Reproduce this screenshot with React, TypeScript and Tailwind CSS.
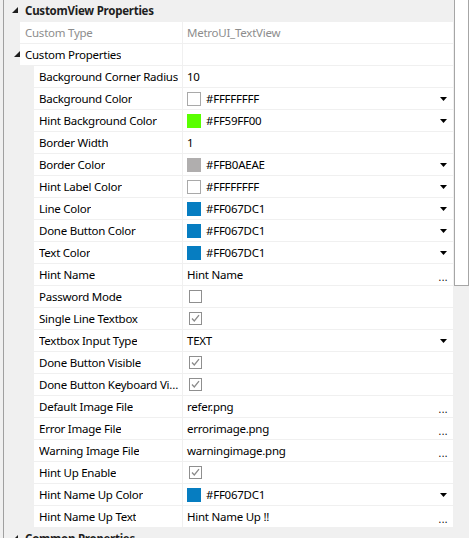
import React from 'react';

type Value =
  | { kind: 'text'; text: string; gray?: boolean }
  | { kind: 'color'; hex: string; swatch: string; outlined?: boolean }
  | { kind: 'check'; checked: boolean }
  | { kind: 'select'; text: string }
  | { kind: 'dialog'; text: string }
  | { kind: 'none' };

interface Row {
  label: string;
  level: 0 | 1;
  group?: boolean;
  gray?: boolean;
  value: Value;
}

const rows: Row[] = [
  { label: 'Custom Type', level: 0, gray: true, value: { kind: 'text', text: 'MetroUI_TextView', gray: true } },
  { label: 'Custom Properties', level: 0, group: true, value: { kind: 'none' } },
  { label: 'Background Corner Radius', level: 1, value: { kind: 'text', text: '10' } },
  { label: 'Background Color', level: 1, value: { kind: 'color', hex: '#FFFFFFFF', swatch: '#ffffff', outlined: true } },
  { label: 'Hint Background Color', level: 1, value: { kind: 'color', hex: '#FF59FF00', swatch: '#59ff00' } },
  { label: 'Border Width', level: 1, value: { kind: 'text', text: '1' } },
  { label: 'Border Color', level: 1, value: { kind: 'color', hex: '#FFB0AEAE', swatch: '#b0aeae' } },
  { label: 'Hint Label Color', level: 1, value: { kind: 'color', hex: '#FFFFFFFF', swatch: '#ffffff', outlined: true } },
  { label: 'Line Color', level: 1, value: { kind: 'color', hex: '#FF067DC1', swatch: '#067dc1' } },
  { label: 'Done Button Color', level: 1, value: { kind: 'color', hex: '#FF067DC1', swatch: '#067dc1' } },
  { label: 'Text Color', level: 1, value: { kind: 'color', hex: '#FF067DC1', swatch: '#067dc1' } },
  { label: 'Hint Name', level: 1, value: { kind: 'dialog', text: 'Hint Name' } },
  { label: 'Password Mode', level: 1, value: { kind: 'check', checked: false } },
  { label: 'Single Line Textbox', level: 1, value: { kind: 'check', checked: true } },
  { label: 'Textbox Input Type', level: 1, value: { kind: 'select', text: 'TEXT' } },
  { label: 'Done Button Visible', level: 1, value: { kind: 'check', checked: true } },
  { label: 'Done Button Keyboard Visible', level: 1, value: { kind: 'check', checked: true } },
  { label: 'Default Image File', level: 1, value: { kind: 'dialog', text: 'refer.png' } },
  { label: 'Error Image File', level: 1, value: { kind: 'dialog', text: 'errorimage.png' } },
  { label: 'Warning Image File', level: 1, value: { kind: 'dialog', text: 'warningimage.png' } },
  { label: 'Hint Up Enable', level: 1, value: { kind: 'check', checked: true } },
  { label: 'Hint Name Up Color', level: 1, value: { kind: 'color', hex: '#FF067DC1', swatch: '#067dc1' } },
  { label: 'Hint Name Up Text', level: 1, value: { kind: 'dialog', text: 'Hint Name Up !!' } },
];

function Expander() {
  return (
    <svg width="6" height="6" viewBox="0 0 6 6" className="shrink-0">
      <polygon points="6,0 6,6 0,6" fill="#1e1e1e" />
    </svg>
  );
}

function DropArrow() {
  return (
    <svg width="7" height="4" viewBox="0 0 7 4" className="shrink-0">
      <polygon points="0,0 7,0 3.5,4" fill="#000" />
    </svg>
  );
}

function CheckBox({ checked }: { checked: boolean }) {
  return (
    <div className="w-[13px] h-[13px] border border-[#8f8f8f] bg-white flex items-center justify-center">
      {checked && (
        <svg width="11" height="11" viewBox="0 0 11 11">
          <path d="M2 5.5 L4.3 8 L9 2.2" fill="none" stroke="#8a8a8a" strokeWidth="1.3" />
        </svg>
      )}
    </div>
  );
}

function ValueCell({ value }: { value: Value }) {
  switch (value.kind) {
    case 'text':
      return <span className={value.gray ? 'text-[#8d8d8d]' : 'text-black'}>{value.text}</span>;
    case 'color':
      return (
        <div className="flex flex-1 items-center">
          <div
            className={`w-[14px] h-[14px] shrink-0 ${value.outlined ? 'border border-[#a9a9a9]' : ''}`}
            style={{ backgroundColor: value.swatch }}
          />
          <span className="ml-[5px] text-black">{value.hex}</span>
          <div className="ml-auto mr-[6px]">
            <DropArrow />
          </div>
        </div>
      );
    case 'check':
      return (
        <div className="pl-[2px]">
          <CheckBox checked={value.checked} />
        </div>
      );
    case 'select':
      return (
        <div className="flex flex-1 items-center">
          <span className="text-black">{value.text}</span>
          <div className="ml-auto mr-[6px]">
            <DropArrow />
          </div>
        </div>
      );
    case 'dialog':
      return (
        <div className="flex flex-1 items-center">
          <span className="text-black">{value.text}</span>
          <span className="ml-auto mr-[5px] text-[10px] leading-[10px] text-black tracking-[0.5px] pt-[4px]">...</span>
        </div>
      );
    default:
      return null;
  }
}

function Category({ title }: { title: string }) {
  return (
    <div className="h-[22px] flex items-center shrink-0">
      <div className="w-[21px] flex justify-center pl-[1px] -mt-[2px]">
        <Expander />
      </div>
      <span className="font-bold text-[#1e1e1e]">{title}</span>
    </div>
  );
}

export default function App() {
  return (
    <div className="w-[469px] h-[538px] overflow-hidden bg-[#f0f0f0] flex text-[11.5px] tracking-[-0.25px] font-['Segoe_UI','Noto_Sans',sans-serif] leading-[16px] select-none">
      <div className="w-[3px] shrink-0" />
      <div className="w-px bg-[#a0a0a0] shrink-0" />

      {/* property grid */}
      <div className="w-[449px] flex flex-col shrink-0">
        <Category title="CustomView Properties" />
        {rows.map((r, i) => (
          <div key={i} className="h-[22px] flex shrink-0 border-b border-[#f0f0f0]">
            <div className={`${r.level === 1 ? 'w-[30px]' : 'w-[16px]'} shrink-0 flex items-center justify-center`}>
              {r.group && (
                <div className="pl-[9px] -mt-[2px]">
                  <Expander />
                </div>
              )}
            </div>
            <div className={`flex items-center bg-white border-r border-[#f0f0f0] min-w-0 ${r.level === 1 ? 'w-[149px] pl-[5px] pr-[2px]' : 'w-[163px] pl-[5px]'}`}>
              <span className={`truncate ${r.gray ? 'text-[#8d8d8d]' : 'text-black'}`}>{r.label}</span>
            </div>
            <div className="flex-1 flex items-center bg-white pl-[4px]">
              <ValueCell value={r.value} />
            </div>
          </div>
        ))}
        <Category title="Common Properties" />
      </div>

      {/* scrollbar */}
      <div className="flex-1 flex flex-col pl-px">
        <div className="h-[286px] bg-white border-x border-b border-[#a6a6a6]" />
      </div>
    </div>
  );
}
